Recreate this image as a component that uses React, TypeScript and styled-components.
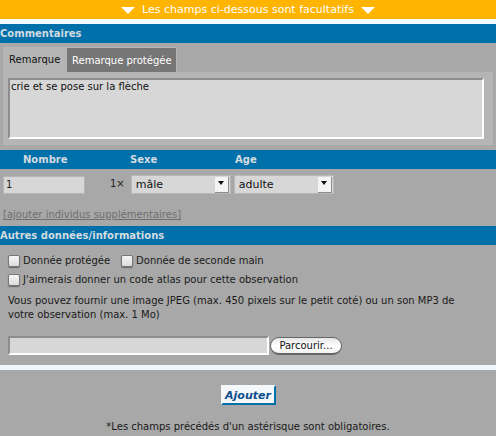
import React from "react";
import styled, { createGlobalStyle } from "styled-components";

const GlobalStyle = createGlobalStyle`
  html, body {
    margin: 0;
    padding: 0;
    background: #a8a8a8;
  }
  body {
    font-family: "DejaVu Sans", Verdana, sans-serif;
    font-size: 10px;
    color: #111;
  }
`;

const Page = styled.div`
  width: 496px;
  height: 436px;
  overflow: hidden;
  background: #a8a8a8;
`;

const OptionalBanner = styled.div`
  height: 19px;
  background: #ffb400;
  color: #fff;
  font-size: 11px;
  line-height: 20px;
  display: flex;
  justify-content: center;
  align-items: center;
  gap: 7px;
  border-bottom: 5px solid #f2fafd;
`;

const Arrow = styled.span`
  width: 0;
  height: 0;
  margin-top: 1px;
  border-left: 7px solid transparent;
  border-right: 7px solid transparent;
  border-top: 7px solid #fff;
`;

const SectionBar = styled.div`
  height: 19px;
  background: #0070aa;
  color: #d5dbe0;
  font-size: 10px;
  font-weight: bold;
  line-height: 19px;
`;

const ColumnsBar = styled(SectionBar)`
  display: grid;
  grid-template-columns: 130px 105px 1fr;
  margin-top: 5px;
  padding-left: 0;
`;

const ColumnLabel = styled.span<{ $indent?: number }>`
  padding-left: ${(p) => p.$indent ?? 0}px;
`;

const TabBlock = styled.div`
  margin: 4px 3px 0;
`;

const TabRow = styled.div`
  display: flex;
  height: 25px;
`;

const Tab = styled.div<{ $active?: boolean }>`
  box-sizing: border-box;
  height: 25px;
  line-height: 25px;
  padding: 0 0 0 ${(p) => (p.$active ? "6px" : "5px")};
  white-space: nowrap;
  width: ${(p) => (p.$active ? "64px" : "110px")};
  background: ${(p) => (p.$active ? "#b5b5b5" : "#767676")};
  color: ${(p) => (p.$active ? "#111" : "#fff")};
  border: ${(p) => (p.$active ? "none" : "1px solid #b5b5b5")};
  border-bottom: none;
  border-left: none;
`;

const TabPanel = styled.div`
  box-sizing: border-box;
  height: 73px;
  background: #b5b5b5;
  padding: 6px 9px 6px 5px;
`;

const CommentBox = styled.textarea`
  display: block;
  box-sizing: border-box;
  width: 476px;
  height: 61px;
  margin: 0;
  padding: 1px 1px;
  resize: none;
  outline: none;
  background: #d7d7d7;
  border: 2px solid;
  border-color: #8d8d8d #fff #fff #8d8d8d;
  font: 10px "DejaVu Sans", Verdana, sans-serif;
  line-height: 12px;
  color: #111;
`;

const CountRow = styled.div`
  display: flex;
  align-items: center;
  height: 25px;
  padding: 3px 0 0 3px;
`;

const CountInput = styled.input`
  box-sizing: border-box;
  width: 82px;
  height: 18px;
  padding: 0 2px;
  border: 1px solid #b5b5b5;
  background: #d7d7d7;
  outline: none;
  font: 10px "DejaVu Sans", Verdana, sans-serif;
  color: #222;
`;

const Multiplier = styled.span`
  margin: -3px 6px 0 25px;
  color: #222;
`;

const SelectBox = styled.div<{ $width: number }>`
  box-sizing: border-box;
  width: ${(p) => p.$width}px;
  height: 19px;
  margin-right: 3px;
  display: flex;
  align-items: center;
  justify-content: space-between;
  border: 1px solid #b8b8b8;
  background: #d7d7d7;
  padding: 0 1px 0 4px;
  font-size: 11px;
  color: #111;
`;

const SelectArrow = styled.span`
  box-sizing: border-box;
  width: 14px;
  height: 16px;
  background: #f4f4f4;
  border-right: 1px solid #8c8c8c;
  border-bottom: 1px solid #8c8c8c;
  display: flex;
  justify-content: center;
  align-items: center;
  &::before {
    content: "";
    margin-top: -3px;
    border-left: 3px solid transparent;
    border-right: 3px solid transparent;
    border-top: 4px solid #111;
  }
`;

const MoreLink = styled.a`
  display: block;
  margin: 12px 0 5px 3px;
  line-height: 12px;
  color: #6f6f6f;
  text-decoration: underline;
`;

const CheckList = styled.div`
  padding: 6px 0 0 8px;
`;

const CheckRow = styled.div`
  display: flex;
  align-items: center;
  height: 19px;
`;

const CheckBox = styled.span`
  box-sizing: border-box;
  width: 12px;
  height: 12px;
  margin-right: 3px;
  border: 1px solid #777;
  border-radius: 2px;
  background: linear-gradient(#f6f6f6, #dcdcdc);
  box-shadow: 0 1px 1px #666;
`;

const CheckLabel = styled.label`
  margin-right: 11px;
  color: #1a1a1a;
`;

const HelpText = styled.p`
  margin: 5px 0 0 8px;
  width: 470px;
  line-height: 14px;
  color: #1a1a1a;
`;

const FileRow = styled.div`
  display: flex;
  align-items: center;
  margin: 14px 0 0 8px;
`;

const FilePath = styled.div`
  box-sizing: border-box;
  width: 261px;
  height: 19px;
  background: #d7d7d7;
  border: 2px solid;
  border-color: #8d8d8d #fff #fff #8d8d8d;
`;

const BrowseButton = styled.button`
  box-sizing: border-box;
  width: 72px;
  height: 18px;
  margin: 0 0 0 1px;
  padding: 0;
  border: 1px solid #666;
  border-bottom-width: 2px;
  border-radius: 9px;
  background: linear-gradient(#e6e6e6, #fff 55%, #f2f2f2);
  font: 10px "DejaVu Sans", Verdana, sans-serif;
  color: #111;
`;

const Divider = styled.div`
  height: 5px;
  margin-top: 10px;
  background: #eef8fc;
`;

const Footer = styled.div`
  display: flex;
  flex-direction: column;
  align-items: center;
  padding-top: 15px;
`;

const SubmitButton = styled.button`
  box-sizing: border-box;
  width: 55px;
  height: 20px;
  margin: 0;
  padding: 0;
  background: #f4f8fb;
  border: 2px solid;
  border-color: #f4f8fb #0070aa #0070aa #f4f8fb;
  color: #0d4d8c;
  font: italic bold 11px "DejaVu Sans", Verdana, sans-serif;
`;

const Footnote = styled.p`
  margin: 16px 0 0;
  line-height: 12px;
  color: #1a1a1a;
`;

export default function App() {
  return (
    <Page>
      <GlobalStyle />
      <OptionalBanner>
        <Arrow />
        <span>Les champs ci-dessous sont facultatifs</span>
        <Arrow />
      </OptionalBanner>

      <SectionBar>Commentaires</SectionBar>
      <TabBlock>
        <TabRow>
          <Tab $active>Remarque</Tab>
          <Tab>Remarque protégée</Tab>
        </TabRow>
        <TabPanel>
          <CommentBox defaultValue="crie et se pose sur la flèche" />
        </TabPanel>
      </TabBlock>

      <ColumnsBar>
        <ColumnLabel $indent={23}>Nombre</ColumnLabel>
        <ColumnLabel>Sexe</ColumnLabel>
        <ColumnLabel>Age</ColumnLabel>
      </ColumnsBar>
      <CountRow>
        <CountInput defaultValue="1" />
        <Multiplier>1×</Multiplier>
        <SelectBox $width={100}>
          mâle
          <SelectArrow />
        </SelectBox>
        <SelectBox $width={100}>
          adulte
          <SelectArrow />
        </SelectBox>
      </CountRow>
      <MoreLink>[ajouter individus supplémentaires]</MoreLink>

      <SectionBar>Autres données/informations</SectionBar>
      <CheckList>
        <CheckRow>
          <CheckBox />
          <CheckLabel>Donnée protégée</CheckLabel>
          <CheckBox />
          <CheckLabel>Donnée de seconde main</CheckLabel>
        </CheckRow>
        <CheckRow>
          <CheckBox />
          <CheckLabel>J'aimerais donner un code atlas pour cette observation</CheckLabel>
        </CheckRow>
      </CheckList>
      <HelpText>
        Vous pouvez fournir une image JPEG (max. 450 pixels sur le petit coté) ou un son MP3 de
        votre observation (max. 1 Mo)
      </HelpText>
      <FileRow>
        <FilePath />
        <BrowseButton>Parcourir...</BrowseButton>
      </FileRow>
      <Divider />

      <Footer>
        <SubmitButton>Ajouter</SubmitButton>
        <Footnote>*Les champs précédés d'un astérisque sont obligatoires.</Footnote>
      </Footer>
    </Page>
  );
}
